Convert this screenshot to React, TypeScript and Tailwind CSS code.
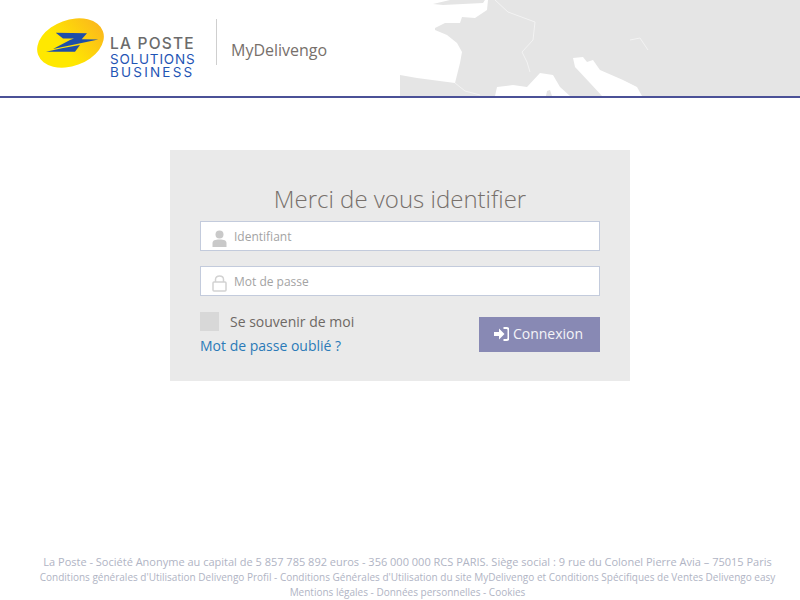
import React from 'react';

const MapBackground = () => (
  <svg className="absolute right-0 top-0 blur-[0.5px]" width="400" height="96" viewBox="0 0 400 96" aria-hidden="true">
    <path
      d="M35 28 L45 23 L60 23 L62 17 L75 18 L87 10 L88 0 L400 0 L400 96 L0 96 L0 75 L17 78 L55 83 L60 63 L62 52 L57 43 L47 35 L35 30 Z"
      fill="#e5e5e5"
    />
    <path d="M33 4 L50 0 L85 0 L83 3 L63 4 L43 5 Z" fill="#e5e5e5" />
    {/* Mediterranean and Adriatic */}
    <path d="M95 96 L97 87 L113 85 L127 87 L140 73 L153 75 L160 87 L170 96 Z" fill="#fff" />
    <path d="M146 96 L147 91 L150 90 L152 96 Z" fill="#e5e5e5" />
    <path d="M173 58 L183 57 L187 62 L193 60 L200 70 L223 80 L237 87 L242 96 L202 96 L190 83 L175 67 Z" fill="#fff" />
    {/* borders */}
    <path d="M95 0 L108 12 L135 22 L133 40 L122 52 L127 62 L130 72" fill="none" stroke="#f3f3f3" strokeWidth="1" />
    <path d="M55 83 L65 91 L80 95" fill="none" stroke="#f3f3f3" strokeWidth="1" />
    <path d="M230 40 L240 38 L248 50" fill="none" stroke="#f3f3f3" strokeWidth="1" />
  </svg>
);

const Logo = () => (
  <div className="flex items-start">
    <svg width="68" height="52" viewBox="0 0 68 52" aria-hidden="true">
      <defs>
        <linearGradient id="posteYellow" x1="0.35" y1="0.5" x2="1" y2="0.35">
          <stop offset="0" stopColor="#ffe800" />
          <stop offset="1" stopColor="#fbb81c" />
        </linearGradient>
      </defs>
      <ellipse cx="33.5" cy="26" rx="34.5" ry="23" transform="rotate(-20 33.5 26)" fill="url(#posteYellow)" />
      <path d="M18.7 15.7 L50 16.3 L44.7 22.3 L61.3 22.5 L16 32 L33 23 L37 21.5 L26 21.5 Z" fill="#1f4ea8" />
      <path d="M9 34.7 L26 31 L43 28 L38 34.7 Z" fill="#1f4ea8" />
    </svg>
    <div className="ml-[5px] mt-[18px] flex w-[85px] flex-col whitespace-nowrap font-['Inter',sans-serif]">
      <span className="text-[15.5px] font-medium leading-[18px] tracking-[1.2px] text-[#6b6b6b]">LA POSTE</span>
      <span className="text-[13.5px] leading-[13px] tracking-[0.8px] text-[#1f55b5]">SOLUTIONS</span>
      <span className="text-[13.5px] leading-[12px] tracking-[2.2px] text-[#1f55b5]">BUSINESS</span>
    </div>
  </div>
);

const UserIcon = () => (
  <svg width="15" height="17" viewBox="0 0 15 17" fill="#c9c9c9" aria-hidden="true">
    <circle cx="7.5" cy="4.5" r="4" />
    <path d="M0.5 17 L0.5 13 C0.5 10.5 3 9.5 7.5 9.5 C12 9.5 14.5 10.5 14.5 13 L14.5 17 Z" />
  </svg>
);

const LockIcon = () => (
  <svg width="15" height="17" viewBox="0 0 15 17" fill="none" stroke="#d2d2d2" strokeWidth="1.5" aria-hidden="true">
    <rect x="1" y="7" width="13" height="9" rx="1" />
    <path d="M3.5 7 L3.5 4.5 C3.5 2.2 5.2 1 7.5 1 C9.8 1 11.5 2.2 11.5 4.5 L11.5 7" />
  </svg>
);

const LoginIcon = () => (
  <svg width="15" height="14" viewBox="0 0 15 14" fill="#fff" aria-hidden="true">
    <path d="M0 5 L5 5 L5 1.5 L10.5 7 L5 12.5 L5 9 L0 9 Z" />
    <path d="M9.5 1 L12.5 1 C13.6 1 14.5 1.9 14.5 3 L14.5 11 C14.5 12.1 13.6 13 12.5 13 L9.5 13" fill="none" stroke="#fff" strokeWidth="2" />
  </svg>
);

const Field = ({ icon, placeholder }: { icon: React.ReactNode; placeholder: string }) => (
  <div className="flex h-[30px] items-center border border-[#c3cbdc] bg-white pl-[11px]">
    <span className="mt-[4px] flex w-[22px] shrink-0">{icon}</span>
    <span className="mt-[1px] text-[12px] text-[#a3a3a3]">{placeholder}</span>
  </div>
);

export default function App() {
  return (
    <div className="flex min-h-[600px] flex-col bg-white font-['Open_Sans',sans-serif]">
      <header className="relative h-[98px] shrink-0 overflow-hidden border-b-2 border-[#4b5197]">
        <MapBackground />
        <div className="relative flex items-start pl-[37px] pt-[17px]">
          <Logo />
          <div className="ml-[21px] mt-[2px] h-[46px] w-px bg-[#cfcfcf]" />
          <span className="ml-[14px] mt-[21px] text-[16px] text-[#77706b]">MyDelivengo</span>
        </div>
      </header>

      <main className="mx-auto mt-[52px] h-[231px] w-[460px] bg-[#eaeaea] px-[30px] pt-[31px]">
        <h1 className="text-center text-[24px] font-light leading-[35px] text-[#77706b]">Merci de vous identifier</h1>
        <div className="mt-[5px] flex flex-col gap-[15px]">
          <Field icon={<UserIcon />} placeholder="Identifiant" />
          <Field icon={<LockIcon />} placeholder="Mot de passe" />
        </div>
        <div className="mt-[15px] flex items-start justify-between">
          <div>
            <label className="flex items-center">
              <span className="h-[19px] w-[19px] bg-[#d8d8d8]" />
              <span className="ml-[11px] text-[14px] text-[#6e6864]">Se souvenir de moi</span>
            </label>
            <a className="mt-[4px] block text-[14px] leading-[19px] text-[#2a7ab8]">Mot de passe oublié ?</a>
          </div>
          <button className="mt-[6px] flex h-[35px] w-[121px] items-center justify-center gap-[4px] bg-[#8889b4] pb-[2px] pr-[2px] text-[14px] text-[#f4f4f8]">
            <LoginIcon />
            Connexion
          </button>
        </div>
      </main>

      <footer className="mt-auto pl-[15px] text-center text-[#b0b4c4]">
        <p className="text-[11px] leading-[17px]">
          La Poste - Société Anonyme au capital de 5 857 785 892 euros - 356 000 000 RCS PARIS. Siège social : 9 rue du Colonel Pierre Avia – 75015 Paris
        </p>
        <p className="text-[10px] leading-[15px]">
          Conditions générales d'Utilisation Delivengo Profil - Conditions Générales d'Utilisation du site MyDelivengo et Conditions Spécifiques de Ventes Delivengo easy
        </p>
        <p className="text-[10px] leading-[15px]">Mentions légales - Données personnelles - Cookies</p>
      </footer>
    </div>
  );
}
